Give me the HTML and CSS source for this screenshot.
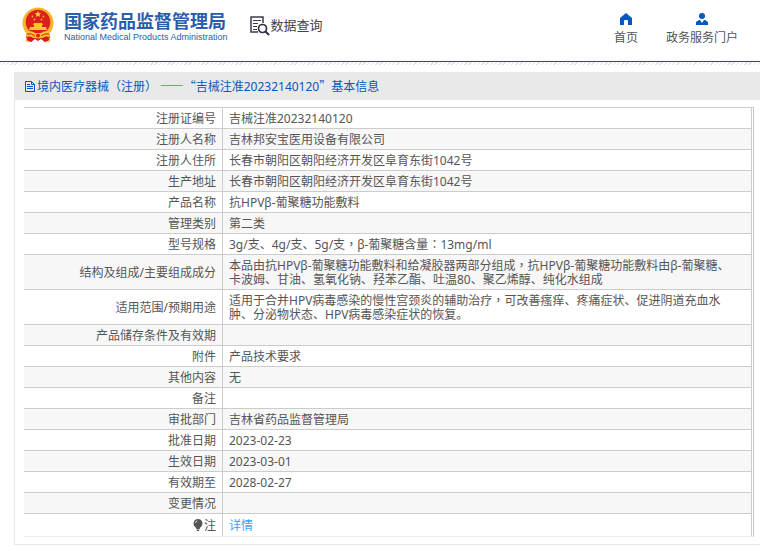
FILE: index.html
```html
<!DOCTYPE html>
<html lang="zh-CN">
<head>
<meta charset="utf-8">
<title>国家药品监督管理局 数据查询</title>
<link rel="stylesheet" href="styles.css">
</head>
<body>
<header class="header">
  <a class="brand" href="#">
    <svg class="emblem" viewBox="0 0 32 36" aria-hidden="true">
      <path d="M5 24 4 33l5 2 4-3 3 2 3-2 4 3 5-2-1-9z" fill="#d7191c"/>
      <circle cx="16" cy="16" r="15.5" fill="#f3b52c"/>
      <circle cx="16" cy="15" r="12.3" fill="#df1f1c"/>
      <path d="m16 4 .9 2.100 2.300.2-1.700 1.500.5 2.200-2-1.200-2 1.200.5-2.200-1.700-1.500 2.300-.2z" fill="#f9cf3c"/>
      <g fill="#f3b52c"><circle cx="10.500" cy="9.500" r=".9"/><circle cx="12.500" cy="12.500" r=".9"/><circle cx="19.500" cy="12.500" r=".9"/><circle cx="21.500" cy="9.500" r=".9"/></g>
      <path d="M12 16h8l1 2h-1v2h4l1 3H7l1-3h4v-2h-1z" fill="#f8c535"/>
      <path d="M4 25q6-2 9 1l3 0 3 0q3-3 9-1l-1 5q-5-2-8 1l-3-1-3 1q-3-3-8-1z" fill="#f8c535"/>
      <path d="M5 27q5-1 8 2m14-2q-5-1-8 2M9 30v5m14-5v5" fill="none" stroke="#d7191c"/>
      <circle cx="16" cy="28.500" r="2" fill="#df1f1c"/>
      <path d="m5 31-1 3 4 1m19-4 1 3-4 1" fill="none" stroke="#f8c535"/>
    </svg>
    <span class="names">
      <span class="name">国家药品监督管理局</span>
      <span class="name-en">National Medical Products Administration</span>
    </span>
  </a>
  <a class="query" href="#">
    <svg class="query-icon" viewBox="0 0 20 20" aria-hidden="true">
      <path d="M8 16H1V1h12v6" fill="none" stroke="#3c3c4c" stroke-width="1.500"/>
      <path d="M3 4.500h8M3 7.500h5M3 10.500h4M3 13.500h4" stroke="#3c3c4c"/>
      <circle cx="12.500" cy="12.500" r="4" fill="#fff" stroke="#2f2f40" stroke-width="1.700"/>
      <path d="m15.500 15.500 3.500 3.500" stroke="#2f2f40" stroke-width="2"/>
    </svg>
    <span>数据查询</span>
  </a>
  <nav class="nav">
    <a href="#">
      <svg viewBox="0 0 12 12" aria-hidden="true"><path d="M6 0 0 5v7h4V8q0-1 1-1h2q1 0 1 1v4h4V5z" fill="#0657bf"/></svg>
      <span>首页</span>
    </a>
    <a href="#">
      <svg viewBox="0 0 12 12" aria-hidden="true"><circle cx="6" cy="3" r="3" fill="#0657bf"/><path d="M0 12V9l3-2h1l2 3 2-3h1l3 2v3z" fill="#0657bf"/></svg>
      <span>政务服务门户</span>
    </a>
  </nav>
</header>
<div class="stripe"></div>
<main class="panel">
  <h1 class="panel-title">
    <svg viewBox="0 0 10 11" aria-hidden="true"><path d="M.5.5h6l3 3v7h-9zM6.500.5v3h3M2 3.500h3M2 5.500h6M2 7.500h6" fill="none" stroke="#0657bf"/></svg>
    <span>境内医疗器械（注册） ——“吉械注准<span class="latin">20232140120</span>”基本信息</span>
  </h1>
  <div class="panel-body">
    <table class="info">
      <tbody>
        <tr><th scope="row">注册证编号</th><td>吉械注准20232140120</td></tr>
        <tr><th scope="row">注册人名称</th><td>吉林邦安宝医用设备有限公司</td></tr>
        <tr><th scope="row">注册人住所</th><td>长春市朝阳区朝阳经济开发区阜育东街1042号</td></tr>
        <tr><th scope="row">生产地址</th><td>长春市朝阳区朝阳经济开发区阜育东街1042号</td></tr>
        <tr><th scope="row">产品名称</th><td>抗HPVβ-葡聚糖功能敷料</td></tr>
        <tr><th scope="row">管理类别</th><td>第二类</td></tr>
        <tr><th scope="row">型号规格</th><td>3g/支、4g/支、5g/支<span class="mid" lang="zh-TW">，</span>β-葡聚糖含量<span class="mid" lang="zh-TW">：</span>13mg/ml</td></tr>
        <tr><th scope="row">结构及组成/主要组成成分</th><td>本品由抗HPVβ-葡聚糖功能敷料和给凝胶器两部分组成<span class="mid" lang="zh-TW">，</span>抗HPVβ-葡聚糖功能敷料由β-葡聚糖、卡波姆、甘油、氢氧化钠、羟苯乙酯、吐温80、聚乙烯醇、纯化水组成</td></tr>
        <tr><th scope="row">适用范围/预期用途</th><td>适用于合并HPV病毒感染的慢性宫颈炎的辅助治疗<span class="mid" lang="zh-TW">，</span>可改善瘙痒、疼痛症状、促进阴道充血水肿、分泌物状态、HPV病毒感染症状的恢复。</td></tr>
        <tr><th scope="row">产品储存条件及有效期</th><td></td></tr>
        <tr><th scope="row">附件</th><td>产品技术要求</td></tr>
        <tr><th scope="row">其他内容</th><td>无</td></tr>
        <tr><th scope="row">备注</th><td></td></tr>
        <tr><th scope="row">审批部门</th><td>吉林省药品监督管理局</td></tr>
        <tr><th scope="row">批准日期</th><td>2023-02-23</td></tr>
        <tr><th scope="row">生效日期</th><td>2023-03-01</td></tr>
        <tr><th scope="row">有效期至</th><td>2028-02-27</td></tr>
        <tr><th scope="row">变更情况</th><td></td></tr>
        <tr class="note"><th scope="row"><svg class="bulb" viewBox="0 0 10 12" aria-hidden="true"><path d="M5 0a4.500 4.500 0 0 1 2.500 8.200L6.500 10h-3L2.500 8.200A4.500 4.500 0 0 1 5 0zM3.500 10.500h3L6 12H4z" fill="#555"/><path d="M2.500 4Q2.600 2.300 4.300 2" fill="none" stroke="#fff" stroke-width=".8"/></svg>注</th><td><a href="#">详情</a></td></tr>
      </tbody>
    </table>
  </div>
</main>
</body>
</html>
```
FILE: styles.css
```css
* {
  box-sizing: border-box;
}

body {
  margin: 0;
  overflow-x: hidden;
  background: #fff;
  color: #555;
  font: 12px/14px "Noto Sans", "Noto Sans CJK SC", sans-serif;
}

a {
  color: inherit;
  text-decoration: none;
}

svg {
  display: block;
  flex: none;
}

.header {
  display: flex;
  align-items: flex-start;
  padding: 7px 22px 16px;
  border-bottom: 1px solid #0657a8;
}

.brand {
  display: flex;
  gap: 10px;
  color: #2b5cad;
}

.emblem {
  width: 32px;
  height: 36px;
}

.names {
  display: flex;
  flex-direction: column;
  padding-top: 3px;
  white-space: nowrap;
}

.name {
  font: bold 18px/20px "Noto Sans CJK SC", sans-serif;
}

.name-en {
  font: 9px/14px "Liberation Sans", sans-serif;
}

.query {
  display: flex;
  gap: 1px;
  margin-left: 22px;
  padding-top: 9px;
  color: #444;
  font-size: 13px;
  line-height: 18px;
}

.query-icon {
  width: 20px;
  height: 20px;
}

.nav {
  display: flex;
  gap: 28px;
  margin-left: auto;
  padding-top: 6px;
}

.nav a {
  display: flex;
  flex-direction: column;
  align-items: center;
  gap: 6px;
}

.nav svg {
  width: 12px;
  height: 12px;
}

.stripe {
  height: 3px;
  margin-bottom: 7px;
  background: repeating-linear-gradient(135deg, #e2e2e2 0 1px, #fff 1px 3px);
}

.panel {
  margin: 0 -10px 0 14px;
  border: 1px solid #e8e8e8;
  border-top: 0;
}

.panel-title {
  display: flex;
  align-items: center;
  gap: 2px;
  margin: 0 0 0 -1px;
  padding: 7px 11px;
  background: #e9e9e9;
  color: #0657bf;
  font: 12px/14px "Noto Sans CJK SC", sans-serif;
}

.panel-title svg {
  width: 10px;
  height: 11px;
}

.latin {
  font-family: "Noto Sans", sans-serif;
  line-height: 1px;
}

.panel-body {
  padding: 7px 15px 7px 9px;
}

.info {
  width: 100%;
  border-collapse: separate;
  border-spacing: 0;
  border-top: 1px solid #ccc;
  border-right: 1px solid #c8c8d0;
  border-bottom: 1px solid #ebebf3;
  padding-right: 1px;
  background: #fff;
}

.info th,
.info td {
  padding: 4px 6px 2px;
  border-right: 1px solid #ccc;
  border-bottom: 1px solid #ccc;
  font-weight: normal;
}

.info th {
  width: 199px;
  text-align: right;
}

.info td {
  height: 21px;
  padding-right: 12px;
  text-align: left;
}

.info tr:nth-child(even) {
  background: #f7f7f7;
}

.info .note th,
.info .note td {
  padding: 5px 6px 3px;
  border-bottom: 0;
}

.note a {
  color: #409eff;
}

.bulb {
  display: inline-block;
  width: 10px;
  height: 12px;
  margin-right: 1px;
  vertical-align: -1px;
}

.mid {
  font-family: "Noto Sans CJK TC", sans-serif;
  line-height: 1px;
}
```
